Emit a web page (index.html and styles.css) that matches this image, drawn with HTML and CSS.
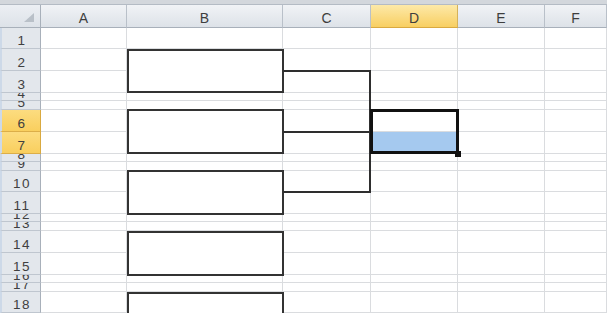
FILE: index.html
```html
<!DOCTYPE html>
<html>
<head>
<meta charset="utf-8">
<link rel="stylesheet" href="styles.css">
</head>
<body>
<div class="sheet">
  <div class="topbar"></div>
  <div class="grid">
    <div class="corner"><span class="tri"></span></div>
    <div class="ch">A</div><div class="ch">B</div><div class="ch">C</div><div class="ch on">D</div><div class="ch">E</div><div class="ch">F</div>

    <div class="rh">1</div><div class="c"></div><div class="c"></div><div class="c"></div><div class="c"></div><div class="c"></div><div class="c"></div>
    <div class="rh">2</div><div class="c"></div><div class="c"></div><div class="c"></div><div class="c"></div><div class="c"></div><div class="c"></div>
    <div class="rh">3</div><div class="c"></div><div class="c"></div><div class="c"></div><div class="c"></div><div class="c"></div><div class="c"></div>
    <div class="rh sm">4</div><div class="c"></div><div class="c"></div><div class="c"></div><div class="c"></div><div class="c"></div><div class="c"></div>
    <div class="rh sm">5</div><div class="c"></div><div class="c"></div><div class="c"></div><div class="c"></div><div class="c"></div><div class="c"></div>
    <div class="rh on">6</div><div class="c"></div><div class="c"></div><div class="c"></div><div class="c"></div><div class="c"></div><div class="c"></div>
    <div class="rh on">7</div><div class="c"></div><div class="c"></div><div class="c"></div><div class="c hl"></div><div class="c"></div><div class="c"></div>
    <div class="rh sm">8</div><div class="c"></div><div class="c"></div><div class="c"></div><div class="c"></div><div class="c"></div><div class="c"></div>
    <div class="rh sm">9</div><div class="c"></div><div class="c"></div><div class="c"></div><div class="c"></div><div class="c"></div><div class="c"></div>
    <div class="rh">10</div><div class="c"></div><div class="c"></div><div class="c"></div><div class="c"></div><div class="c"></div><div class="c"></div>
    <div class="rh">11</div><div class="c"></div><div class="c"></div><div class="c"></div><div class="c"></div><div class="c"></div><div class="c"></div>
    <div class="rh sm">12</div><div class="c"></div><div class="c"></div><div class="c"></div><div class="c"></div><div class="c"></div><div class="c"></div>
    <div class="rh sm">13</div><div class="c"></div><div class="c"></div><div class="c"></div><div class="c"></div><div class="c"></div><div class="c"></div>
    <div class="rh">14</div><div class="c"></div><div class="c"></div><div class="c"></div><div class="c"></div><div class="c"></div><div class="c"></div>
    <div class="rh">15</div><div class="c"></div><div class="c"></div><div class="c"></div><div class="c"></div><div class="c"></div><div class="c"></div>
    <div class="rh sm">16</div><div class="c"></div><div class="c"></div><div class="c"></div><div class="c"></div><div class="c"></div><div class="c"></div>
    <div class="rh sm">17</div><div class="c"></div><div class="c"></div><div class="c"></div><div class="c"></div><div class="c"></div><div class="c"></div>
    <div class="rh">18</div><div class="c"></div><div class="c"></div><div class="c"></div><div class="c"></div><div class="c"></div><div class="c"></div>
  </div>

  <div class="box b1"></div>
  <div class="box b2"></div>
  <div class="box b3"></div>
  <div class="box b4"></div>
  <div class="box b5"></div>

  <div class="line h1"></div>
  <div class="line h2"></div>
  <div class="line h3"></div>
  <div class="line v1"></div>

  <div class="selbox"></div>
  <div class="handle"></div>
</div>
</body>
</html>
```

FILE: styles.css
```css
html, body {
  margin: 0;
  padding: 0;
  background: #ffffff;
  overflow: hidden;
}

.sheet {
  position: relative;
  width: 607px;
  height: 313px;
  overflow: hidden;
  font-family: "Liberation Sans", Arial, sans-serif;
}

.topbar {
  height: 4px;
  background: #d3d7dc;
  border-bottom: 1px solid #b4bbc4;
}

.grid {
  display: grid;
  grid-template-columns: 41px 86px 156px 88px 87px 87px 62px;
  grid-template-rows: 23px 21px 22px 22px 8px 9px 22px 22px 8px 9px 21px 22px 8px 9px 22px 22px 8px 9px 21px;
}

.corner {
  position: relative;
  background: linear-gradient(#eceff3, #dde2e8);
  border-right: 1px solid #a8b0ba;
  border-bottom: 1px solid #a8b0ba;
  box-sizing: border-box;
}

.tri {
  position: absolute;
  right: 6px;
  bottom: 5px;
  width: 0;
  height: 0;
  border-left: 10px solid transparent;
  border-bottom: 9px solid #b9c0c8;
}

.ch {
  box-sizing: border-box;
  background: linear-gradient(#f1f3f6, #dde2e8);
  border-right: 1px solid #b9c0c9;
  border-bottom: 1px solid #a8b0ba;
  display: flex;
  align-items: flex-end;
  justify-content: center;
  padding-bottom: 2px;
  font-size: 14px;
  line-height: 14px;
  color: #3e3e3e;
}

.ch.on {
  background: linear-gradient(#fde9a8, #f8cf62);
  border-bottom-color: #d9a940;
  border-right-color: #d5b25a;
}

.rh {
  box-sizing: border-box;
  background: #e3e7ec;
  border-left: 2px solid #cdd9e8;
  border-right: 1px solid #a8b0ba;
  border-bottom: 1px solid #bfc6cf;
  display: flex;
  align-items: flex-end;
  justify-content: center;
  overflow: hidden;
  font-size: 13.5px;
  line-height: 13px;
  letter-spacing: 1.5px;
  padding-left: 2px;
  padding-bottom: 1px;
  color: #404040;
}

.rh.sm {
  padding-bottom: 0;
}

.rh.on {
  background: linear-gradient(#fcdc80, #f9cf5e);
  border-bottom-color: #dcae48;
  border-right-color: #d9a940;
}

.c {
  box-sizing: border-box;
  border-right: 1px solid #dadcdf;
  border-bottom: 1px solid #dadcdf;
  background: #ffffff;
}

.c.hl {
  background: #a5c9ef;
}

.box {
  position: absolute;
  left: 127px;
  width: 157px;
  box-sizing: border-box;
  border: 2px solid #333333;
  background: #ffffff;
}

.b1 { top: 49px; height: 44px; }
.b2 { top: 109px; height: 45px; }
.b3 { top: 170px; height: 45px; }
.b4 { top: 231px; height: 45px; }
.b5 { top: 292px; height: 40px; }

.line {
  position: absolute;
  background: #2e2e2e;
}

.h1 { left: 283px; top: 70px; width: 88px; height: 2px; }
.h2 { left: 283px; top: 131px; width: 88px; height: 2px; }
.h3 { left: 283px; top: 191px; width: 88px; height: 2px; }
.v1 { left: 369px; top: 70px; width: 2px; height: 123px; }

.selbox {
  position: absolute;
  left: 370px;
  top: 109px;
  width: 89px;
  height: 45px;
  box-sizing: border-box;
  border: 3px solid #111111;
}

.handle {
  position: absolute;
  left: 455px;
  top: 151px;
  width: 6px;
  height: 6px;
  background: #111111;
}
```
